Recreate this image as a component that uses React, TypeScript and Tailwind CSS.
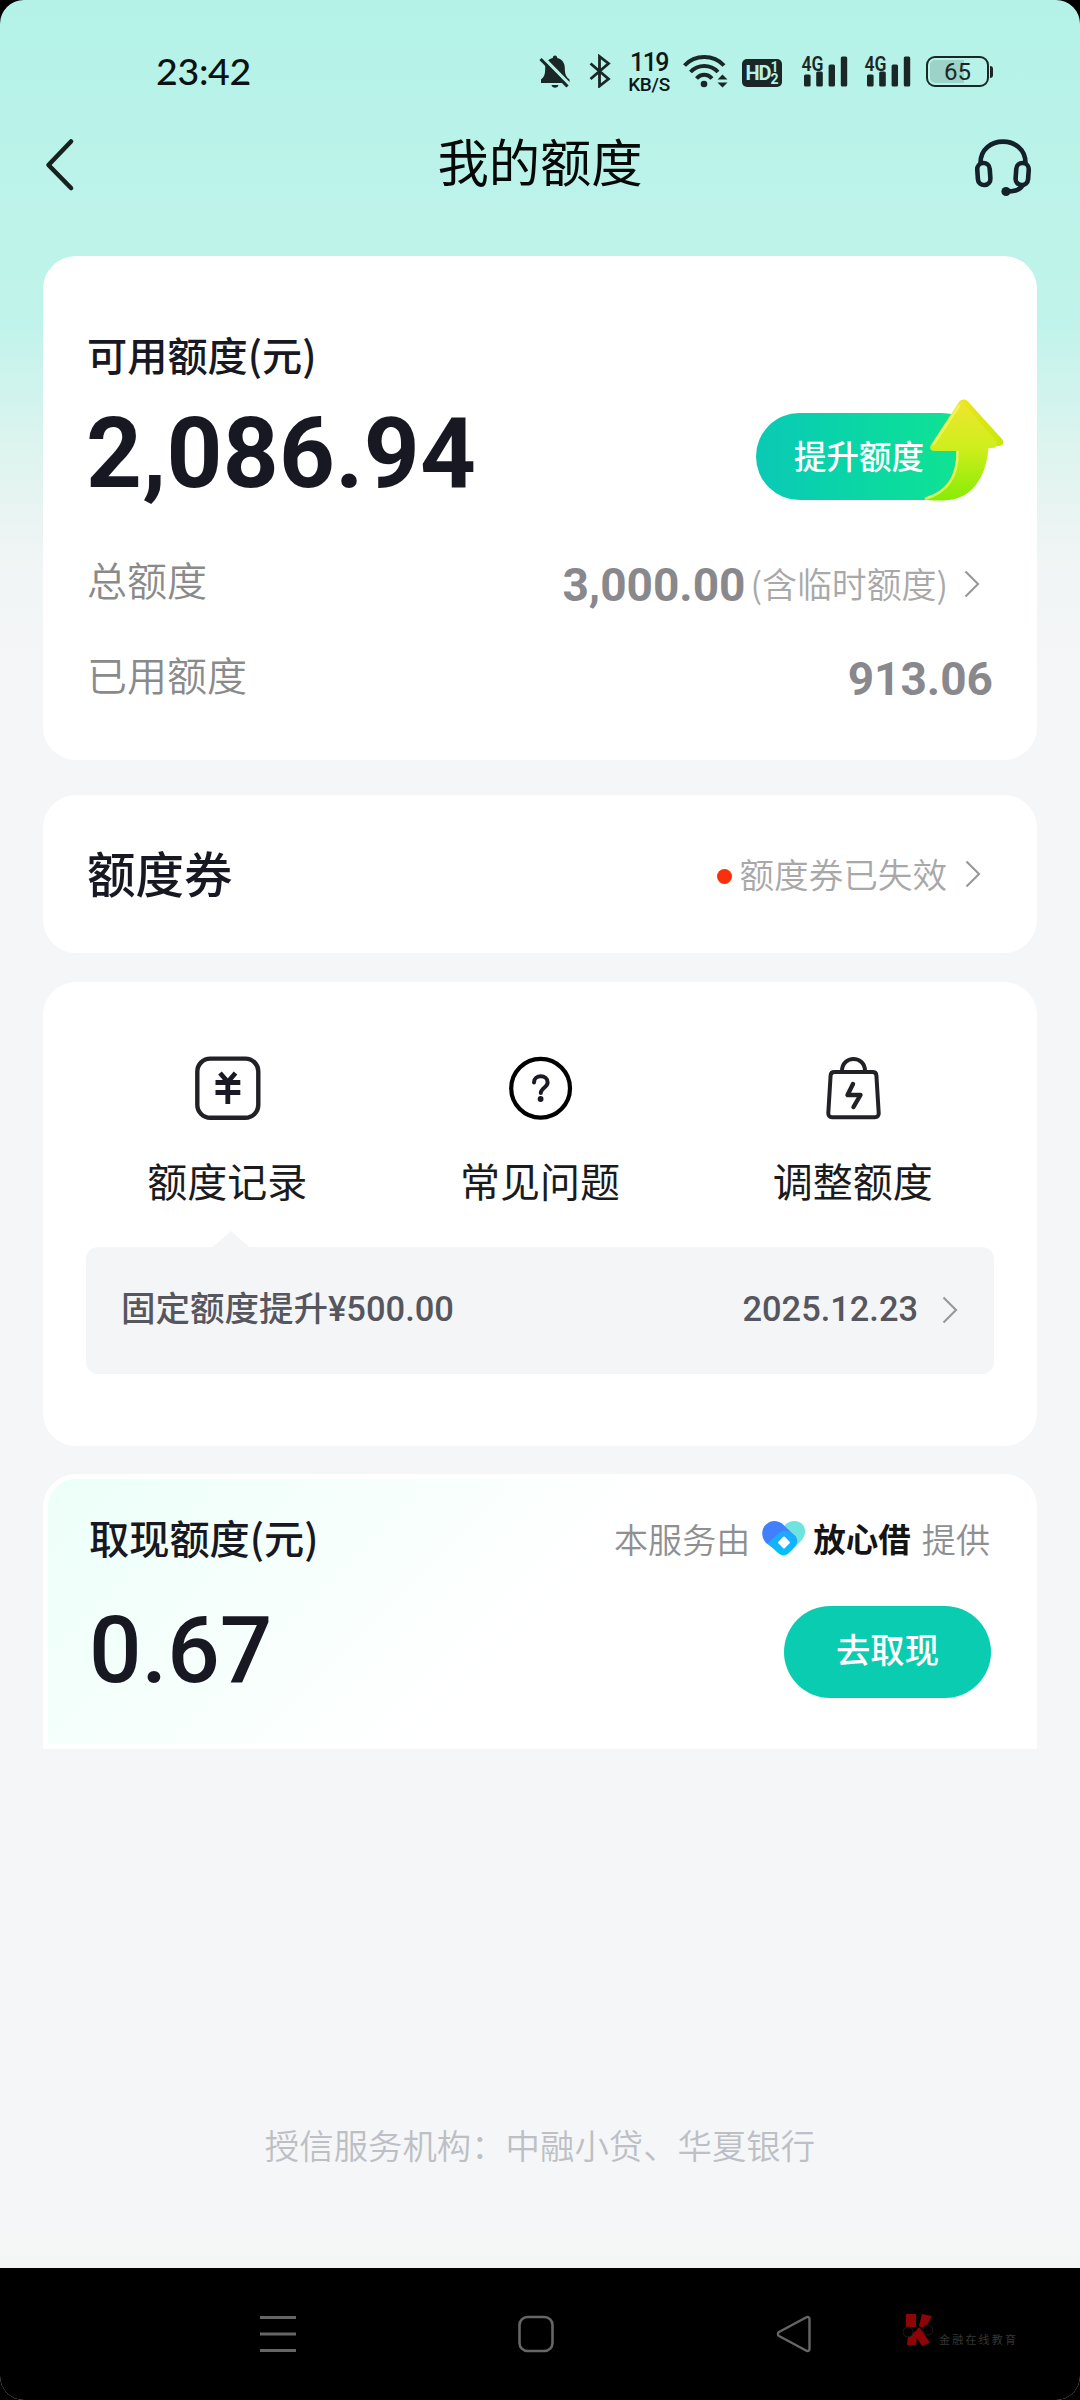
import type { ReactNode } from "react";

const actions = [
  { label: "额度记录", icon: <RecordIcon /> },
  { label: "常见问题", icon: <QuestionIcon /> },
  { label: "调整额度", icon: <BagIcon /> },
];

function Chevron() {
  return (
    <svg className="h-7 w-4" viewBox="0 0 16 28" fill="none" stroke="#9a9a9c" strokeWidth="2.2">
      <path d="M1.5 1.5L14 14L1.5 26.5" />
    </svg>
  );
}

function RecordIcon() {
  return (
    <svg width="68" height="66" viewBox="0 0 68 66" fill="none" stroke="#222226">
      <rect x="4.3" y="3.6" width="61" height="59.2" rx="13" strokeWidth="4.4" />
      <path d="M27 18L34.8 27L42.5 18M34.8 26V49M22.5 27.5H47.3M22.5 37.5H47.3" strokeWidth="4.8" stroke="#191a26" />
    </svg>
  );
}

function QuestionIcon() {
  return (
    <svg width="68" height="66" viewBox="0 0 68 66" fill="none" stroke="#191a26">
      <circle cx="34.6" cy="33.2" r="29.4" strokeWidth="4.2" stroke="#000" />
      <path d="M28 27.5C28 19.3 41.6 19.3 41.6 27.5C41.6 32.5 34.8 33 34.8 38" strokeWidth="4" strokeLinecap="round" />
      <circle cx="34.6" cy="44" r="2.9" fill="#191a26" stroke="none" />
    </svg>
  );
}

function BagIcon() {
  return (
    <svg width="68" height="66" viewBox="0 0 68 66" fill="none" stroke="#222226" strokeWidth="4" strokeLinejoin="round" strokeLinecap="round">
      <path d="M15.5 17H53.5C56 17 57.3 18.5 57.4 20.5L59.7 58C59.9 60.5 58.5 62.3 56 62.3H13C10.5 62.3 9.1 60.5 9.3 58L11.6 20.5C11.7 18.5 13 17 15.5 17Z" />
      <path d="M23 16C23 0 46 0 46 16" />
      <path d="M34 29L28.5 40H41.5L34.5 52" strokeWidth="4.4" />
    </svg>
  );
}

function Signal() {
  return (
    <svg className="-mt-2" width="48" height="42" viewBox="0 -8 48 42" fill="#1a2726">
      <text x="0.5" y="16.5" fontSize="20.5" fontWeight="600" fontFamily="Roboto" textLength="22" lengthAdjust="spacingAndGlyphs">
        4G
      </text>
      <rect x="3" y="20.5" width="6.6" height="12" rx="1.5" />
      <rect x="15.2" y="17.5" width="6.6" height="15" rx="1.5" />
      <rect x="27.6" y="10.5" width="6.4" height="22" rx="1.5" />
      <rect x="39.8" y="2.5" width="6.4" height="30" rx="1.5" />
    </svg>
  );
}

function StatusBar() {
  return (
    <div className="flex h-[102px] items-start pt-[54px] pl-[156px] text-[#0b1211]">
      <span className="mt-[-3px] w-[383px] font-[Lato] text-[37.5px] leading-10 font-medium tracking-[-0.3px]">23:42</span>
      <svg width="32" height="34" viewBox="0 0 32 34" fill="#1a2726">
        <path d="M16 1.5C17.5 1.5 18.2 2.4 18.2 4C23 5.2 25.8 9 25.8 14C25.8 21 27.5 23 30.5 25.5V29H2V25.5C5 23 6.2 21 6.2 14C6.2 9 9 5.2 13.8 4C13.8 2.4 14.5 1.5 16 1.5Z" />
        <path d="M12.5 31H19.5C19 34.5 13 34.5 12.5 31Z" />
        <path d="M4 3.5L33 33" stroke="#b7f2e7" strokeWidth="3.4" />
        <path d="M1.5 5L28.5 32.5" stroke="#1a2726" strokeWidth="3.2" />
      </svg>
      <svg className="ml-[18px]" width="22" height="34" viewBox="0 0 22 34" fill="none" stroke="#1a2726" strokeWidth="2.8">
        <path d="M1.5 9.5L19.5 25L10.5 32V2.5L19.5 9.5L1.5 25" />
      </svg>
      <div className="ml-[17px] flex w-[42px] flex-col items-center font-[Roboto] text-[#0e1716]">
        <span className="text-[25px] leading-[18px] font-medium tracking-[-1.5px]">119</span>
        <span className="mt-[5px] text-[19px] leading-4 font-medium tracking-[-0.3px]">KB/S</span>
      </div>
      <svg className="ml-[13px]" width="46" height="34" viewBox="0 0 46 34" fill="none" stroke="#1a2726" strokeWidth="4">
        <path d="M1.5 11.5C12 0.3 30.5 0.3 41 11.5M7.5 18C15 10 27.5 10 35 18M13.5 24.5C18 19.5 24.5 19.5 29 24.5" />
        <circle cx="21" cy="30" r="3.3" fill="#1a2726" stroke="none" />
        <path d="M34.5 25.5L39.5 20.5L44.5 25.5ZM34.5 28.5L39.5 33.5L44.5 28.5Z" fill="#1a2726" stroke="none" />
      </svg>
      <div className="mt-[5px] ml-[13px] flex h-7 w-10 items-center justify-center rounded-[5px] bg-[#1a2726] font-[Roboto] font-bold text-[#b7f2e7]">
        <span className="text-[20px] leading-none tracking-[-1px]">HD</span>
        <span className="flex flex-col text-[14px] leading-[12px]">
          <span>1</span>
          <span>2</span>
        </span>
      </div>
      <div className="ml-[19px] flex gap-[15px]">
        <Signal />
        <Signal />
      </div>
      <div className="mt-[2px] ml-[14px] flex items-center gap-[1px]">
        <div className="flex h-[31px] w-[63px] items-center justify-center rounded-[9px] border-[2.5px] border-[#1a2726] bg-[linear-gradient(90deg,#9dd2c9_0_36px,transparent_36px)] bg-clip-content p-[2px] font-[Roboto] text-[24px] leading-none text-[#1a2726]">
          65
        </div>
        <div className="h-3 w-[3px] rounded-r bg-[#1a2726]" />
      </div>
    </div>
  );
}

function Header() {
  return (
    <div className="flex h-[154px] items-start justify-between pr-[46px] pl-[44px]">
      <svg className="mt-9" width="62" height="54" viewBox="0 0 62 54" fill="none" stroke="#17211f" strokeWidth="4.6" strokeLinecap="round" strokeLinejoin="round">
        <path d="M27 3.5L4.5 27L27 50" />
      </svg>
      <h1 className="mt-[22px] ml-[2px] text-[51.3px] leading-[72px] font-normal text-[#050a09]">我的额度</h1>
      <svg className="mt-[35px]" width="62" height="62" viewBox="0 0 62 62" fill="none" stroke="#14202a" strokeWidth="4.6" strokeLinecap="round">
        <path d="M8.5 26C8.5 -2.5 53.5 -2.5 53.5 26" />
        <rect x="5.5" y="26" width="12.5" height="22" rx="6.2" transform="rotate(-4 12 36)" />
        <rect x="44" y="26" width="12.5" height="22" rx="6.2" transform="rotate(4 50 36)" />
        <path d="M50.5 48.5C47 54 41 54.500 34 54.500" />
        <circle cx="34" cy="54.5" r="4.6" fill="#14202a" stroke="none" />
      </svg>
    </div>
  );
}

function RaiseButton() {
  return (
    <div className="relative flex h-[87px] w-[229px] items-center rounded-full bg-linear-to-r from-[#0bc9b6] to-[#12e68d] pl-[38px]">
      <span className="-mt-[3px] text-[32.5px] font-medium text-white">提升额度</span>
      <svg className="absolute -top-[15px] right-[-20px]" width="82" height="104" viewBox="0 0 82 104">
        <defs>
          <linearGradient id="arrow" x1="0" y1="0" x2="0" y2="1">
            <stop offset="0" stopColor="#eee62c" />
            <stop offset="0.45" stopColor="#d0ee1e" />
            <stop offset="1" stopColor="#86ec05" />
          </linearGradient>
          <linearGradient id="arrowEdge" x1="0" y1="0" x2="1" y2="1">
            <stop offset="0" stopColor="#f0e321" />
            <stop offset="1" stopColor="#c5e905" />
          </linearGradient>
        </defs>
        <path d="M36 4C38 1 42 0.5 45 3.5L79 41C82 45 80 48 75 48L62 49L35 10Z" fill="url(#arrowEdge)" />
        <path d="M35 5.5C36.5 3 39 3.5 41 6L73 43C75.5 47 74 50 69 50H65.5C64 70 55 102 20 102.5C12 102.8 5 102.5 0.5 101C22 94 33 80 33.5 53H12C7 53 6 49.5 8.5 46Z" fill="url(#arrow)" />
        <path d="M10.5 46L36 8M3 100.5C24 94 35 80 34.5 54" fill="none" stroke="#f2f56f" strokeWidth="2.5" strokeLinecap="round" opacity="0.8" />
      </svg>
    </div>
  );
}

function Card({ children, className = "" }: { children: ReactNode; className?: string }) {
  return <section className={`mx-[43px] rounded-[33px] bg-white ${className}`}>{children}</section>;
}

function AvailableCard() {
  return (
    <Card className="h-[504px] px-[44px] pt-[68px]">
      <h2 className="text-[40.2px] leading-[60px] font-medium text-[#171822]">可用额度(元)</h2>
      <div className="flex h-[136px] items-start justify-between pr-[8px]">
        <span className="mt-[12px] ml-[-1px] font-[Roboto] text-[97.5px] leading-[116px] font-bold tracking-[0.3px] text-[#171822]">2,086.94</span>
        <div className="mt-[29px]">
          <RaiseButton />
        </div>
      </div>
      <div className="mt-[16px] flex h-[94px] items-center justify-between pr-[13px]">
        <span className="mt-[-9px] text-[40px] font-[350] text-[#8a8a8a]">总额度</span>
        <div className="flex items-center">
          <span className="mt-[4px] font-[Roboto] text-[46px] leading-none font-bold text-[#88888d]">3,000.00</span>
          <span className="ml-[5px] text-[34.9px] leading-none font-[350] text-[#a8a8a8]">(含临时额度)</span>
          <span className="mt-[2px] ml-[16px]">
            <Chevron />
          </span>
        </div>
      </div>
      <div className="flex h-[94px] items-center justify-between">
        <span className="mt-[-7px] text-[40px] font-[350] text-[#8a8a8a]">已用额度</span>
        <span className="mt-[4px] font-[Roboto] text-[46px] leading-none font-bold text-[#88888d]">913.06</span>
      </div>
    </Card>
  );
}

function CouponCard() {
  return (
    <Card className="mt-[35px] flex h-[158px] items-center justify-between pr-[56px] pl-[44px]">
      <h2 className="mt-[-3px] text-[48.5px] font-medium text-[#171822]">额度券</h2>
      <div className="flex items-center">
        <span className="mt-[5px] mr-[8px] size-[15px] rounded-full bg-[#fa2f0b]" />
        <span className="mt-[-1px] mr-[18px] text-[34.6px] font-[350] text-[#a8a8a8]">额度券已失效</span>
        <Chevron />
      </div>
    </Card>
  );
}

function ActionsCard() {
  return (
    <Card className="mt-[29px] h-[464px] px-[28px] pt-[73px]">
      <div className="grid grid-cols-3">
        {actions.map((action) => (
          <div key={action.label} className="flex flex-col items-center">
            {action.icon}
            <span className="mt-[29px] mb-[1px] text-[40px] leading-[60px] font-normal text-[#1b1b1d]">{action.label}</span>
          </div>
        ))}
      </div>
      <svg className="mt-5 ml-[142px] block" width="36" height="16" viewBox="0 0 36 16">
        <path d="M0 16L18 0L36 16Z" fill="#f4f5f7" />
      </svg>
      <div className="mx-[15px] flex h-[127px] items-center justify-between rounded-xl bg-[#f4f5f7] px-[36px] text-[34.5px] font-medium text-[#56575e]">
        <span className="mt-[-1px] ml-[-1px] font-[Roboto,'Noto_Sans_CJK_SC',sans-serif]">固定额度提升¥500.00</span>
        <div className="flex items-center gap-[24px]">
          <span className="mt-[-2px] font-[Roboto] text-[34.4px]">2025.12.23</span>
          <Chevron />
        </div>
      </div>
    </Card>
  );
}

function HeartLogo() {
  return (
    <svg width="44" height="36" viewBox="0 0 44 36">
      <defs>
        <linearGradient id="heart" x1="0" y1="0" x2="0" y2="1">
          <stop offset="0" stopColor="#22a4ff" />
          <stop offset="1" stopColor="#00c4fc" />
        </linearGradient>
      </defs>
      <path d="M23 5C28 -0.5 37 -0.5 41 5C44.5 10 43.5 16 39 21L29 31L15 17Z" fill="#6fe3dd" />
      <path d="M4 23C-1 17 -1 9 4 4.5C9 0 15 0 20 3.500L34 17L20 34Z" fill="#4180fb" />
      <path d="M16 14C20 10 25 10 29 12.500L33 15.500C36 19 36 23 33 26.500L28 32C24 36.500 19 36.500 15 32L5.500 23.500Z" fill="url(#heart)" />
      <rect x="17.5" y="18" width="9" height="9" rx="1" transform="rotate(45 22 22.5)" fill="#fff" />
    </svg>
  );
}

function WithdrawCard() {
  return (
    <section className="mx-[43px] mt-[28px] h-[275px] rounded-t-[33px] border-[5px] border-white bg-[linear-gradient(135deg,#ecfff8_0%,#f4fffc_20%,#fff_50%)] pt-[31px] pr-[41px] pl-[41px]">
      <div className="flex h-[60px] items-center justify-between">
        <h2 className="mt-[-6px] text-[40.2px] font-medium text-[#171822]">取现额度(元)</h2>
        <div className="mt-[-3px] mr-[1px] flex items-center text-[34.1px] font-[350] text-[#8f8f92]">
          <span>本服务由</span>
          <span className="mr-[7px] ml-[12px]">
            <HeartLogo />
          </span>
          <span className="mr-[11px] text-[32.5px] font-bold text-[#141414]">放心借</span>
          <span>提供</span>
        </div>
      </div>
      <div className="mt-[36px] flex items-center justify-between">
        <span className="mt-[-1px] font-[Roboto] text-[92.5px] leading-none font-medium text-[#171822]">0.67</span>
        <button className="h-[92px] w-[207px] rounded-full bg-[#0accb1] pb-[7px] text-[34.3px] font-medium text-white">去取现</button>
      </div>
    </section>
  );
}

function NavBar() {
  return (
    <div className="flex h-[132px] items-center bg-black pl-[260px]">
      <svg width="36" height="38" viewBox="0 0 36 38" stroke="#666" strokeWidth="3">
        <path d="M0 2.5H36M0 19H36M0 35.5H36" />
      </svg>
      <svg className="ml-[222px]" width="36" height="38" viewBox="0 0 36 38" fill="none" stroke="#666" strokeWidth="2.6">
        <rect x="1.5" y="2" width="33" height="34" rx="8" />
      </svg>
      <svg className="ml-[222px]" width="36" height="38" viewBox="0 0 36 38" fill="none" stroke="#666" strokeWidth="2.4" strokeLinejoin="round">
        <path d="M33.5 4V34C33.5 36 31.5 36.5 30 35.5L3 21C1.5 20 1.5 18 3 17L30 2.5C31.5 1.5 33.5 2 33.5 4Z" />
      </svg>
      <div className="-mt-2 ml-[91px] flex items-end">
        <svg width="30" height="34" viewBox="0 0 30 34">
          <path d="M3 1H13V14H3ZM19 1L29 3L22 16L16 13ZM5 23L13 18L16 14L20 19L27 30L19 33L14 25L13 32H4Z" fill="#8e0508" />
          <circle cx="5" cy="19" r="5" fill="#000" stroke="#1c1c1c" />
          <circle cx="25" cy="17" r="5" fill="#000" stroke="#1c1c1c" />
        </svg>
        <span className="ml-[6px] text-[11px] leading-4 tracking-[2.2px] text-[#363636]">金融在线教育</span>
      </div>
    </div>
  );
}

export default function App() {
  return (
    <div className="bg-black">
      <div className="flex h-[2400px] w-[1080px] flex-col overflow-hidden rounded-[24px] bg-[linear-gradient(180deg,#b4f2e7_0px,#bef3ea_250px,#c0f3eb_320px,#def4ef_450px,#f2f5f5_570px,#f5f6f8_760px,#f5f6f8_2180px,#f4f6f6_2268px)] font-['Noto_Sans_CJK_SC',sans-serif]">
        <StatusBar />
        <Header />
        <AvailableCard />
        <CouponCard />
        <ActionsCard />
        <WithdrawCard />
        <p className="mt-auto mb-[97px] text-center text-[34.4px] font-[350] text-[#bdbfc4]">授信服务机构：中融小贷、华夏银行</p>
        <NavBar />
      </div>
    </div>
  );
}
